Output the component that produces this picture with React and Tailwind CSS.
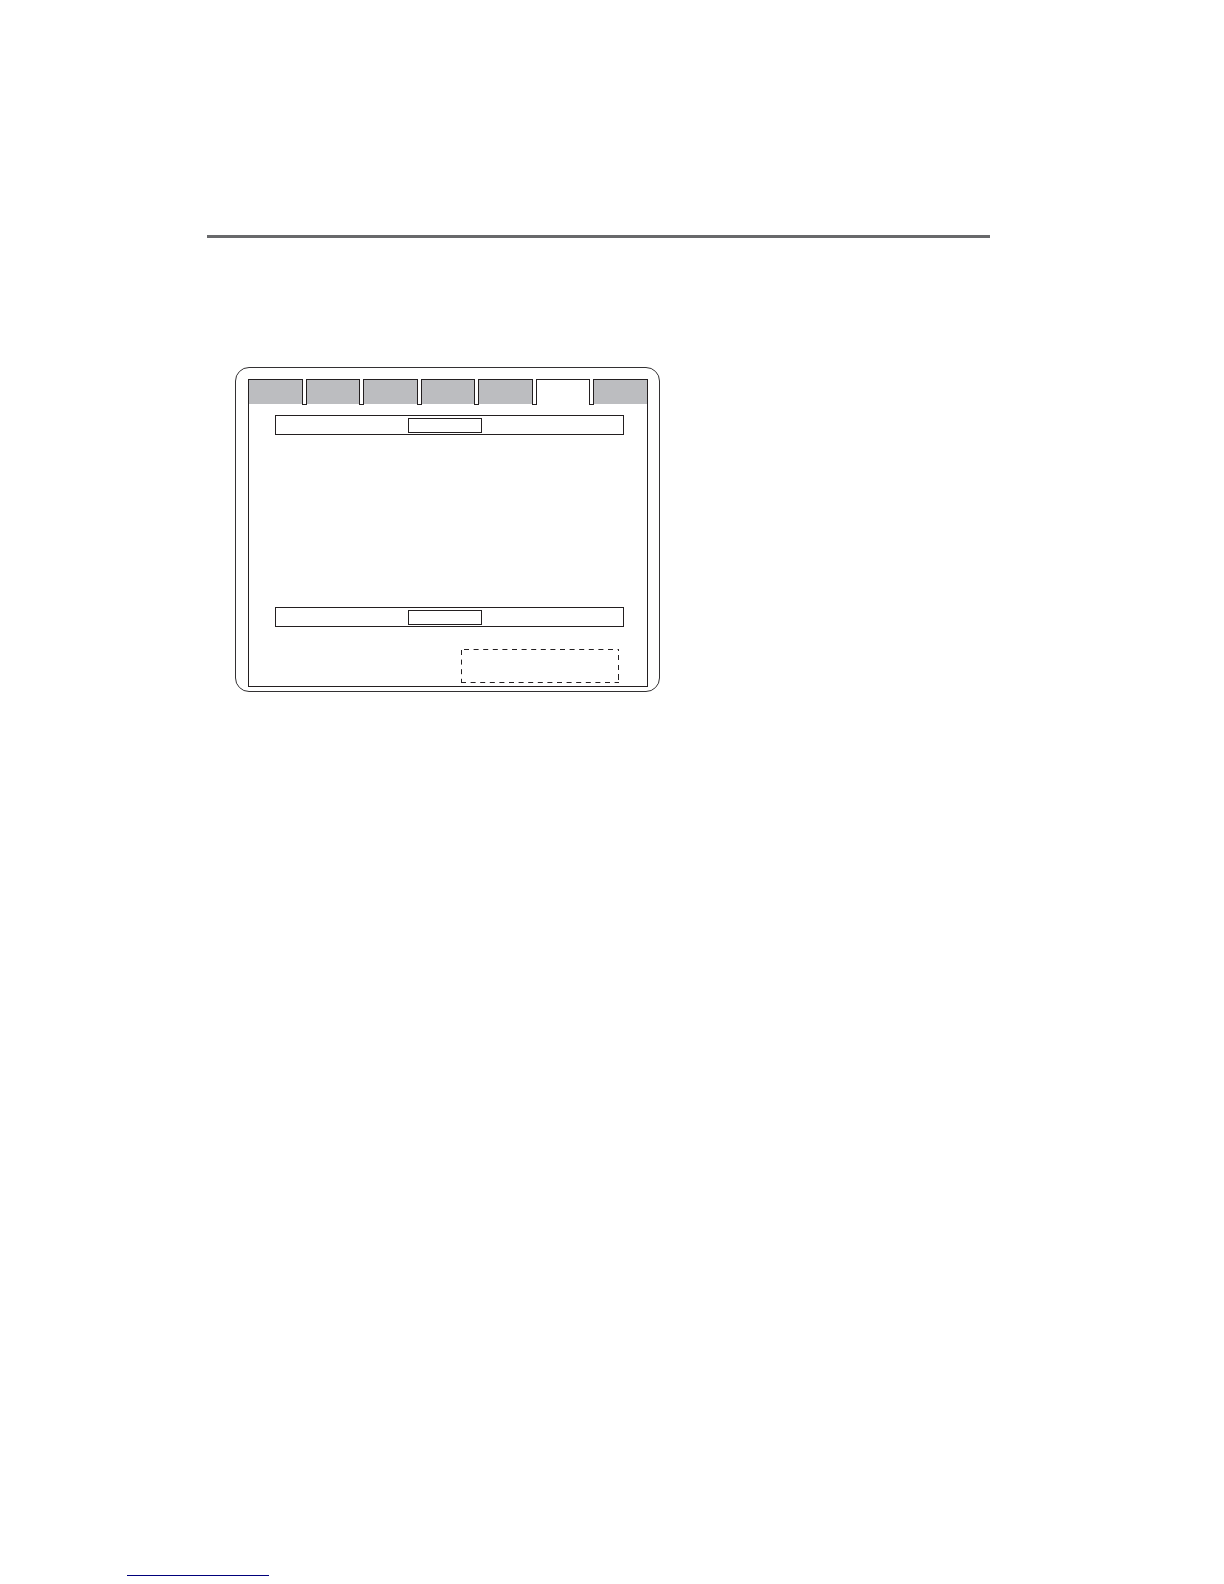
import { Fragment } from "react";

const tabs = ["Tab 1", "Tab 2", "Tab 3", "Tab 4", "Tab 5", "Tab 6", "Tab 7"];
const active = 5;

function Bar({ label }) {
  return (
    <div className="mr-[23px] ml-[26px] flex h-5 items-center border border-[#231f20]">
      <button
        type="button"
        aria-label={label}
        className="ml-[38%] h-[15px] w-[74px] border border-[#231f20] bg-white"
      />
    </div>
  );
}

function Notch() {
  return <span className="h-[26px] w-[5px] shrink-0 border border-t-0 border-[#231f20] bg-white" />;
}

function Screen() {
  return (
    <section className="ml-7 max-w-[425px] rounded-[14px] border border-[#333133] pt-[11px] pr-[11px] pb-1 pl-3">
      <div className="border border-t-0 border-[#231f20] pb-[3px]">
        <nav className="flex items-start">
          {tabs.map((name, i) => (
            <Fragment key={name}>
              <button
                type="button"
                aria-label={name}
                className={
                  "h-[25px] min-w-0 flex-1 border-t border-[#231f20] " +
                  (i === active ? "bg-white" : "bg-[#bcbdc0]")
                }
              />
              {i < tabs.length - 1 && <Notch />}
            </Fragment>
          ))}
        </nav>
        <div className="mt-[10px]">
          <Bar label="Upper field" />
        </div>
        <div className="mt-[172px]">
          <Bar label="Lower field" />
        </div>
        <div className="mt-[22px] mr-7 flex justify-end">
          <svg className="h-[34px] w-[158px]" viewBox="0 0 158 34" fill="none" stroke="#231f20" aria-hidden="true">
            <path d="M3 .5H158" strokeDasharray="5 4.6" />
            <path d="M157.5 0V34" strokeDasharray="2 4 5 5 5 4 6 10" />
            <path d="M0 33.5H158" strokeDasharray="5 4.6" />
            <path d="M.5 1V34" strokeDasharray="5 4.6" />
          </svg>
        </div>
      </div>
    </section>
  );
}

export default function App() {
  return (
    <div className="flex min-h-screen flex-col bg-white font-['Liberation_Sans',sans-serif]">
      <main className="mr-[234px] ml-[207px] flex-1 pt-[235px]">
        <hr className="mb-[129px] h-[3px] border-0 bg-[#68696b]" />
        <Screen />
      </main>
      <footer className="pb-2 pl-[127px]">
        <a href="#" aria-label="Website" className="block h-px w-[142px] bg-[#00007b]" />
      </footer>
    </div>
  );
}
